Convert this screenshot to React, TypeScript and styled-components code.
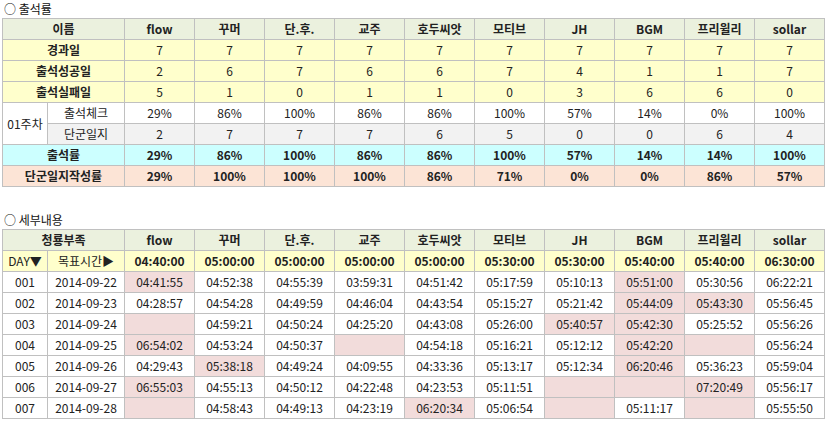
import React from 'react';
import styled, { createGlobalStyle } from 'styled-components';

const GlobalStyle = createGlobalStyle`
  body {
    margin: 0;
    background: #fff;
    font-family: "Noto Sans CJK KR", "Noto Sans", sans-serif;
    font-size: 12px;
    color: #222;
  }
`;

const Page = styled.div`
  padding: 1px 2px 0 2px;
  width: 821px;
`;

const Title = styled.div`
  height: 17px;
  line-height: 16px;
  font-size: 12px;
  padding-left: 2px;
  color: #111;
`;

const Table = styled.table`
  border-collapse: collapse;
  table-layout: fixed;
  width: 821px;
  margin-bottom: ${(p: { $mb?: number }) => p.$mb ?? 0}px;
`;

type Tone = 'head' | 'yellow' | 'white' | 'gray' | 'cyan' | 'peach' | 'pink';
const tones: Record<Tone, string> = {
  head: '#ebf1de',
  yellow: '#ffffcc',
  white: '#ffffff',
  gray: '#f2f2f2',
  cyan: '#ccffff',
  peach: '#fce4d6',
  pink: '#f2dcdb',
};

const Cell = styled.td<{ $tone?: Tone; $bold?: boolean }>`
  border: 1px solid #c0c0c0;
  height: 20px;
  padding: 0;
  text-align: center;
  font-size: 12px;
  line-height: 20px;
  white-space: nowrap;
  overflow: hidden;
  font-weight: ${(p) => (p.$bold ? 700 : 400)};
  background: ${(p) => tones[p.$tone ?? 'white']};
`;

const names = ['flow', '꾸머', '단.후.', '교주', '호두씨앗', '모티브', 'JH', 'BGM', '프리윌리', 'sollar'];

const summary: { label: string; tone: Tone; vals: string[] }[] = [
  { label: '경과일', tone: 'yellow', vals: ['7', '7', '7', '7', '7', '7', '7', '7', '7', '7'] },
  { label: '출석성공일', tone: 'yellow', vals: ['2', '6', '7', '6', '6', '7', '4', '1', '1', '7'] },
  { label: '출석실패일', tone: 'yellow', vals: ['5', '1', '0', '1', '1', '0', '3', '6', '6', '0'] },
];

const check = ['29%', '86%', '100%', '86%', '86%', '100%', '57%', '14%', '0%', '100%'];
const diary = ['2', '7', '7', '7', '6', '5', '0', '0', '6', '4'];
const rate = ['29%', '86%', '100%', '86%', '86%', '100%', '57%', '14%', '14%', '100%'];
const write = ['29%', '100%', '100%', '100%', '86%', '71%', '0%', '0%', '86%', '57%'];

const targets = ['04:40:00', '05:00:00', '05:00:00', '05:00:00', '05:00:00', '05:30:00', '05:30:00', '05:40:00', '05:40:00', '06:30:00'];

// '!' prefix marks a pink (missed) cell
const days: { day: string; date: string; times: string[] }[] = [
  { day: '001', date: '2014-09-22', times: ['!04:41:55', '04:52:38', '04:55:39', '03:59:31', '04:51:42', '05:17:59', '05:10:13', '!05:51:00', '05:30:56', '06:22:21'] },
  { day: '002', date: '2014-09-23', times: ['04:28:57', '04:54:28', '04:49:59', '04:46:04', '04:43:54', '05:15:27', '05:21:42', '!05:44:09', '!05:43:30', '05:56:45'] },
  { day: '003', date: '2014-09-24', times: ['!', '04:59:21', '04:50:24', '04:25:20', '04:43:08', '05:26:00', '!05:40:57', '!05:42:30', '05:25:52', '05:56:26'] },
  { day: '004', date: '2014-09-25', times: ['!06:54:02', '04:53:24', '04:50:37', '!', '04:54:18', '05:16:21', '05:12:12', '!05:42:20', '!', '05:56:24'] },
  { day: '005', date: '2014-09-26', times: ['04:29:43', '!05:38:18', '04:49:24', '04:09:55', '04:33:36', '05:13:17', '05:12:34', '!06:20:46', '05:36:23', '05:59:04'] },
  { day: '006', date: '2014-09-27', times: ['!06:55:03', '04:55:13', '04:50:12', '04:22:48', '04:23:53', '05:11:51', '!', '!', '!07:20:49', '05:56:17'] },
  { day: '007', date: '2014-09-28', times: ['!', '04:58:43', '04:49:13', '04:23:19', '!06:20:34', '05:06:54', '!', '05:11:17', '!', '05:55:50'] },
];

const Cols = () => (
  <colgroup>
    <col style={{ width: 45 }} />
    <col style={{ width: 77 }} />
    {names.map((n) => (
      <col key={n} style={{ width: 70 }} />
    ))}
  </colgroup>
);

export default function App() {
  return (
    <Page>
      <GlobalStyle />
      <Title>○ 출석률</Title>
      <Table $mb={25}>
        <Cols />
        <tbody>
          <tr>
            <Cell colSpan={2} $tone="head" $bold>이름</Cell>
            {names.map((n) => (
              <Cell key={n} $tone="head" $bold>{n}</Cell>
            ))}
          </tr>
          {summary.map((r) => (
            <tr key={r.label}>
              <Cell colSpan={2} $tone={r.tone} $bold>{r.label}</Cell>
              {r.vals.map((v, i) => (
                <Cell key={i} $tone={r.tone}>{v}</Cell>
              ))}
            </tr>
          ))}
          <tr>
            <Cell rowSpan={2}>01주차</Cell>
            <Cell>출석체크</Cell>
            {check.map((v, i) => (
              <Cell key={i}>{v}</Cell>
            ))}
          </tr>
          <tr>
            <Cell $tone="gray">단군일지</Cell>
            {diary.map((v, i) => (
              <Cell key={i} $tone="gray">{v}</Cell>
            ))}
          </tr>
          <tr>
            <Cell colSpan={2} $tone="cyan" $bold>출석률</Cell>
            {rate.map((v, i) => (
              <Cell key={i} $tone="cyan" $bold>{v}</Cell>
            ))}
          </tr>
          <tr>
            <Cell colSpan={2} $tone="peach" $bold>단군일지작성률</Cell>
            {write.map((v, i) => (
              <Cell key={i} $tone="peach" $bold>{v}</Cell>
            ))}
          </tr>
        </tbody>
      </Table>
      <Title>○ 세부내용</Title>
      <Table>
        <Cols />
        <tbody>
          <tr>
            <Cell colSpan={2} $tone="head" $bold>청룡부족</Cell>
            {names.map((n) => (
              <Cell key={n} $tone="head" $bold>{n}</Cell>
            ))}
          </tr>
          <tr>
            <Cell $tone="yellow">DAY▼</Cell>
            <Cell $tone="yellow">목표시간▶</Cell>
            {targets.map((t, i) => (
              <Cell key={i} $tone="yellow" $bold>{t}</Cell>
            ))}
          </tr>
          {days.map((d) => (
            <tr key={d.day}>
              <Cell>{d.day}</Cell>
              <Cell>{d.date}</Cell>
              {d.times.map((t, i) => {
                const miss = t.startsWith('!');
                return (
                  <Cell key={i} $tone={miss ? 'pink' : 'white'}>
                    {miss ? t.slice(1) : t}
                  </Cell>
                );
              })}
            </tr>
          ))}
        </tbody>
      </Table>
    </Page>
  );
}
